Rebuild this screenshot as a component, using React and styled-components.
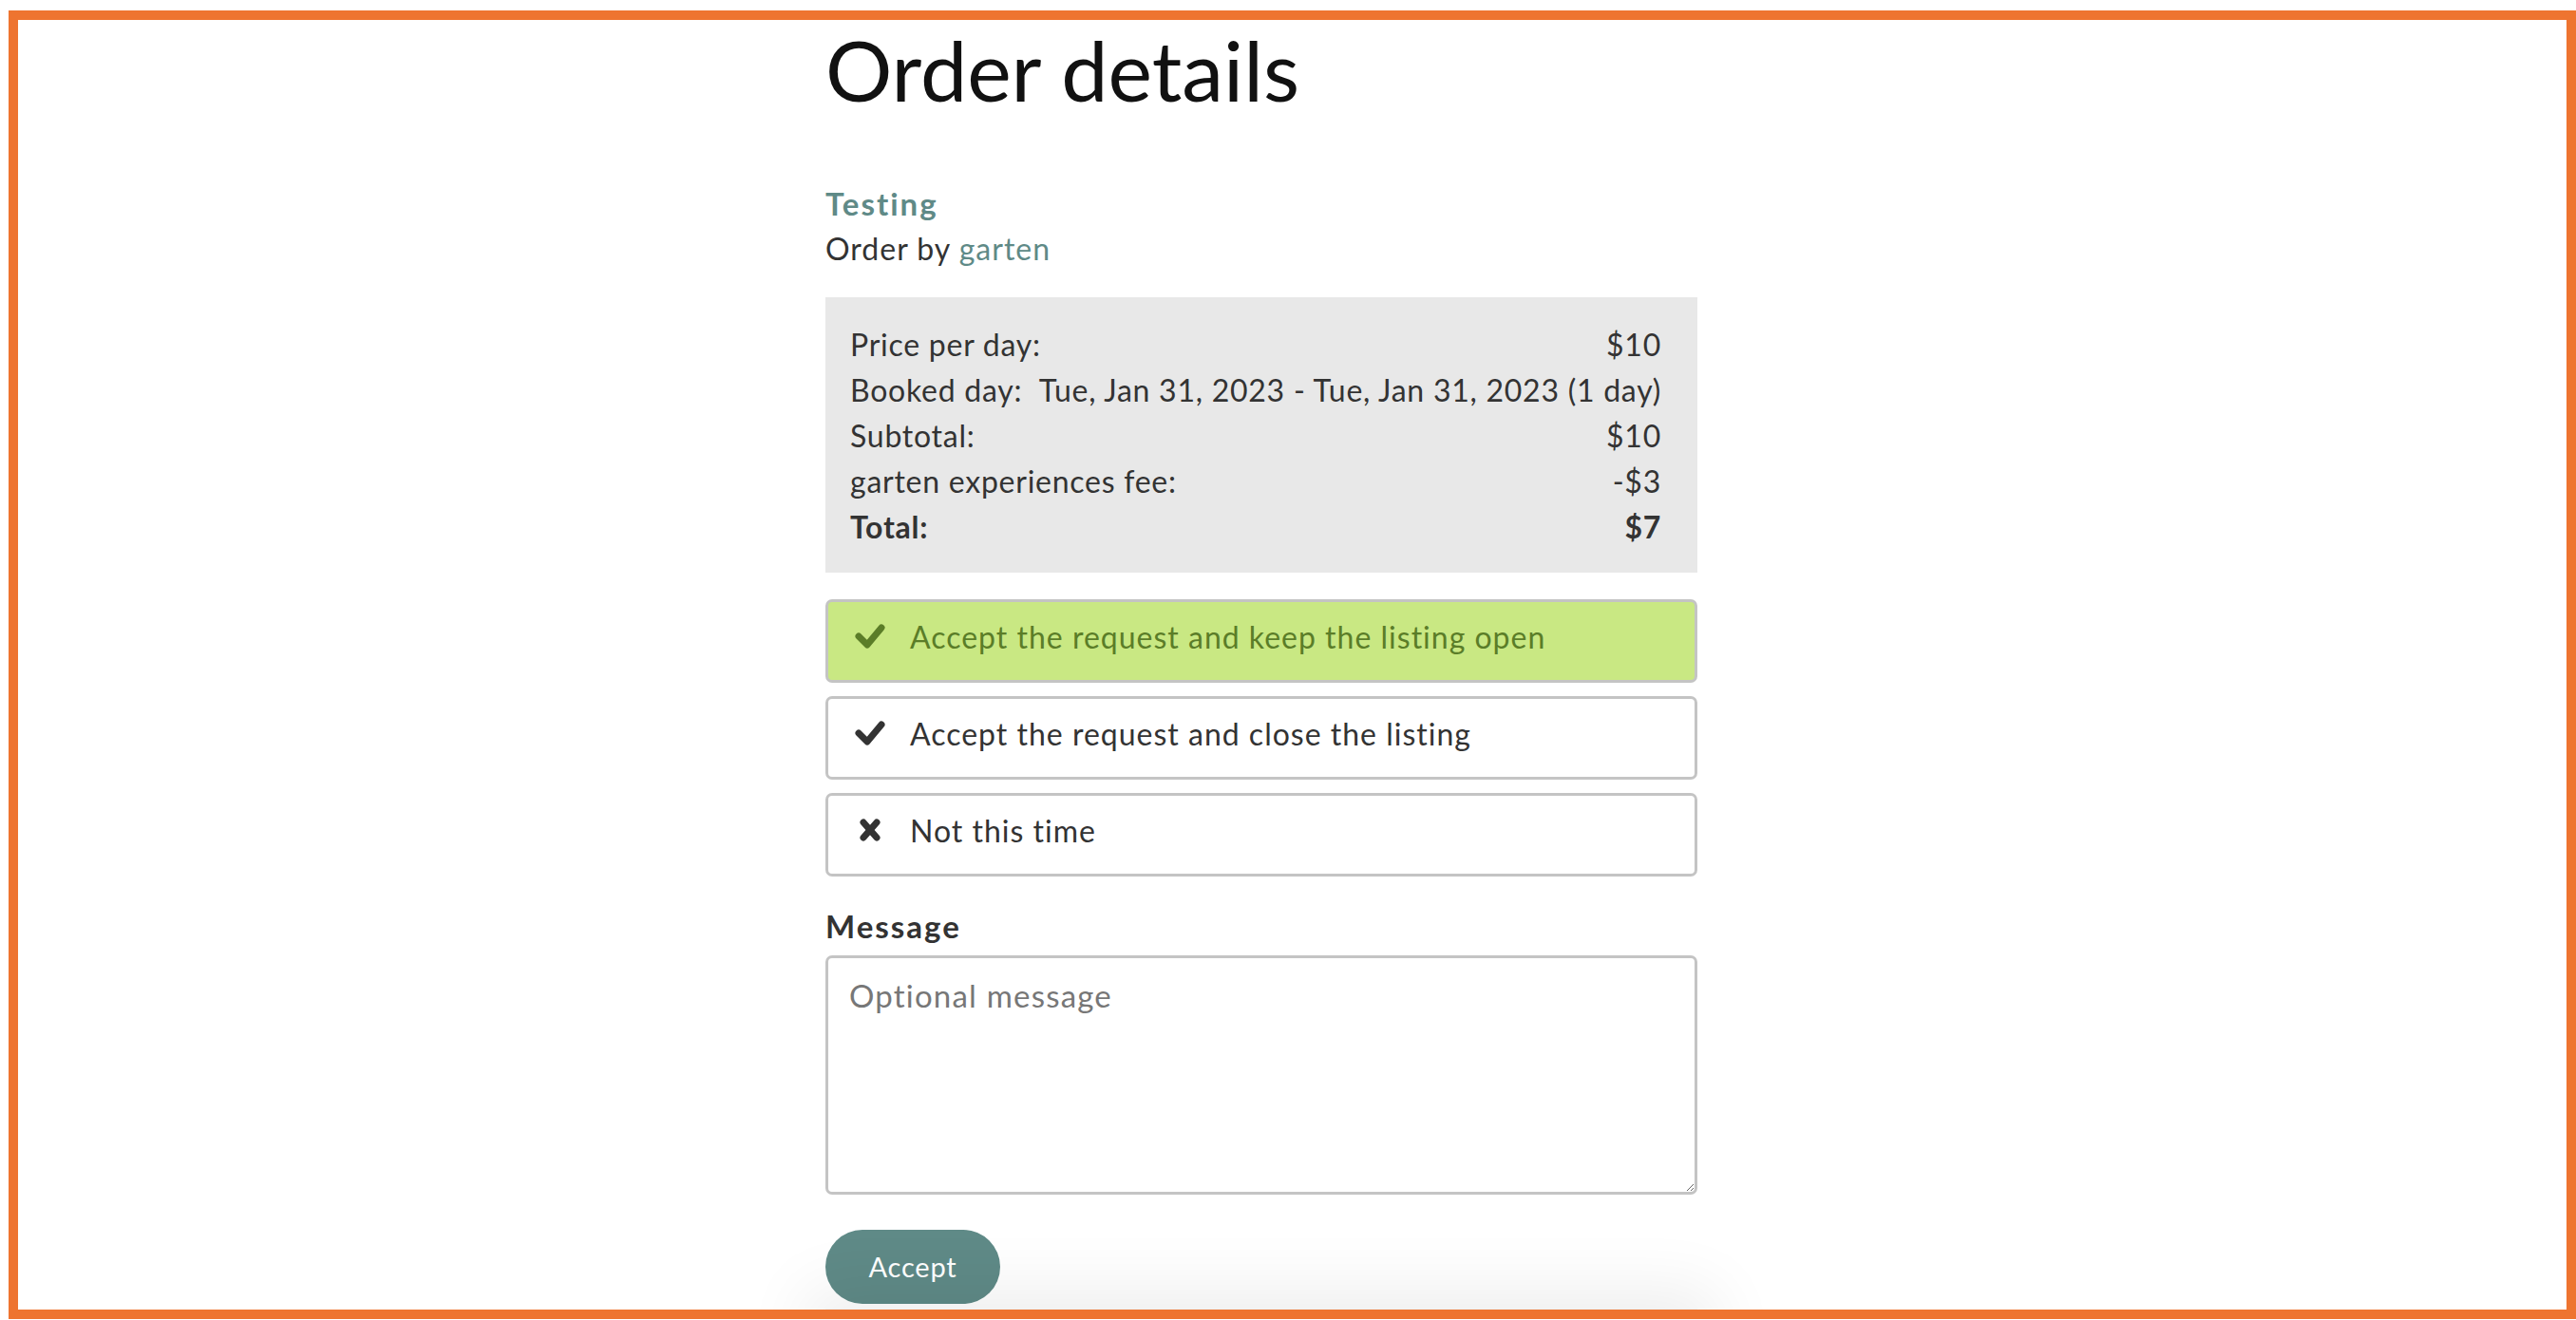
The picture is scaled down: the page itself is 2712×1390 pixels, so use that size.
import React, { useState } from "react";
import styled, { createGlobalStyle } from "styled-components";

const GlobalStyle = createGlobalStyle`
  html, body {
    margin: 0;
    padding: 0;
    background: #fff;
    overflow: hidden;
  }
  body {
    font-family: Lato, "Open Sans", sans-serif;
    color: #333;
  }
`;

const options = [
  { id: "open", icon: "check", label: "Accept the request and keep the listing open" },
  { id: "close", icon: "check", label: "Accept the request and close the listing" },
  { id: "decline", icon: "cross", label: "Not this time" },
];

const rows = [
  { label: "Price per day:", value: "$10" },
  { label: "Booked day:", value: "Tue, Jan 31, 2023 - Tue, Jan 31, 2023 (1 day)" },
  { label: "Subtotal:", value: "$10" },
  { label: "garten experiences fee:", value: "-$3" },
  { label: "Total:", value: "$7", total: true },
];

function CheckIcon() {
  return (
    <Icon viewBox="0 0 32 30">
      <polyline points="4,14 13,23 28,5" />
    </Icon>
  );
}

function CrossIcon() {
  return (
    <Icon viewBox="0 0 32 30">
      <line x1="9" y1="6" x2="23" y2="22" />
      <line x1="23" y1="6" x2="9" y2="22" />
    </Icon>
  );
}

function App() {
  const [choice, setChoice] = useState("open");
  return (
    <>
      <GlobalStyle />
      <Frame>
        <Column>
          <Title>Order details</Title>
          <ListingName href="#">Testing</ListingName>
          <OrderBy>
            Order by <UserLink href="#">garten</UserLink>
          </OrderBy>
          <PriceBox>
            {rows.map((row) => (
              <PriceRow key={row.label} total={row.total}>
                <span>{row.label}</span>
                <span>{row.value}</span>
              </PriceRow>
            ))}
          </PriceBox>
          <Options>
            {options.map((opt) => (
              <Option
                key={opt.id}
                selected={choice === opt.id}
                onClick={() => setChoice(opt.id)}
              >
                {opt.icon === "check" ? <CheckIcon /> : <CrossIcon />}
                {opt.label}
              </Option>
            ))}
          </Options>
          <Label htmlFor="message">Message</Label>
          <MessageBox id="message" placeholder="Optional message" />
          <AcceptButton>Accept</AcceptButton>
          <FooterShade />
        </Column>
      </Frame>
    </>
  );
}

export default App;

const Frame = styled.div`
  box-sizing: border-box;
  margin: 11px 0 0 9px;
  width: 2703px;
  height: 1378px;
  border: 10px solid #ee7430;
  overflow: hidden;
  background: #fff;
`;

const Column = styled.div`
  width: 918px;
  margin-left: 850px;
  display: flex;
  flex-direction: column;
  align-items: flex-start;
`;

const Title = styled.h1`
  margin: 0;
  font-size: 88px;
  line-height: 1.2;
  font-weight: 400;
  color: #111;
`;

const ListingName = styled.a`
  margin-top: 64px;
  font-size: 33px;
  line-height: 47px;
  font-weight: 700;
  letter-spacing: 2px;
  color: #5f8a87;
  text-decoration: none;
`;

const OrderBy = styled.div`
  font-size: 32px;
  line-height: 48px;
  letter-spacing: 1px;
  color: #333;
`;

const UserLink = styled.a`
  color: #5f8a87;
  text-decoration: none;
`;

const PriceBox = styled.div`
  box-sizing: border-box;
  align-self: stretch;
  margin-top: 27px;
  padding: 26px 38px 24px 26px;
  background: #e8e8e8;
`;

const PriceRow = styled.div`
  display: flex;
  justify-content: space-between;
  gap: 6px;
  font-size: 32px;
  line-height: 48px;
  letter-spacing: 0.75px;
  font-weight: ${(p) => (p.total ? 700 : 400)};
  color: #333;
  white-space: nowrap;
`;

const Options = styled.div`
  align-self: stretch;
  margin-top: 28px;
  display: flex;
  flex-direction: column;
  gap: 14px;
`;

const Option = styled.div`
  box-sizing: border-box;
  height: 88px;
  display: flex;
  align-items: flex-start;
  gap: 26px;
  padding: 13px 24px 0 28px;
  border: 3px solid #c4c4c4;
  border-radius: 7px;
  background: ${(p) => (p.selected ? "#c9e883" : "#fff")};
  color: ${(p) => (p.selected ? "#5b7d28" : "#333")};
  font-size: 32px;
  line-height: 48px;
  letter-spacing: 1px;
  cursor: pointer;
`;

const Icon = styled.svg`
  flex: none;
  width: 32px;
  height: 30px;
  margin-top: 9px;
  overflow: visible;
  fill: none;
  stroke: currentColor;
  stroke-width: 7;
  stroke-linecap: round;
  stroke-linejoin: round;
`;

const Label = styled.label`
  margin-top: 28px;
  font-size: 33px;
  line-height: 48px;
  font-weight: 700;
  letter-spacing: 2px;
  color: #333;
`;

const MessageBox = styled.textarea`
  box-sizing: border-box;
  align-self: stretch;
  margin-top: 7px;
  height: 252px;
  padding: 15px 22px;
  border: 3px solid #c4c4c4;
  border-radius: 7px;
  font-family: Lato, "Open Sans", sans-serif;
  font-size: 33px;
  line-height: 48px;
  letter-spacing: 1.2px;
  color: #333;
  outline: none;
  &::placeholder {
    color: #777;
  }
`;

const AcceptButton = styled.button`
  margin-top: 37px;
  width: 184px;
  height: 78px;
  border: none;
  border-radius: 39px;
  background: #5f8a87;
  color: #fff;
  font-family: Lato, "Open Sans", sans-serif;
  font-size: 29px;
  letter-spacing: 0.8px;
  cursor: pointer;
`;

const FooterShade = styled.div`
  align-self: stretch;
  margin-top: 5px;
  height: 120px;
  background: #f0f0f0;
  box-shadow: 0 0 70px 20px rgba(0, 0, 0, 0.07);
`;
